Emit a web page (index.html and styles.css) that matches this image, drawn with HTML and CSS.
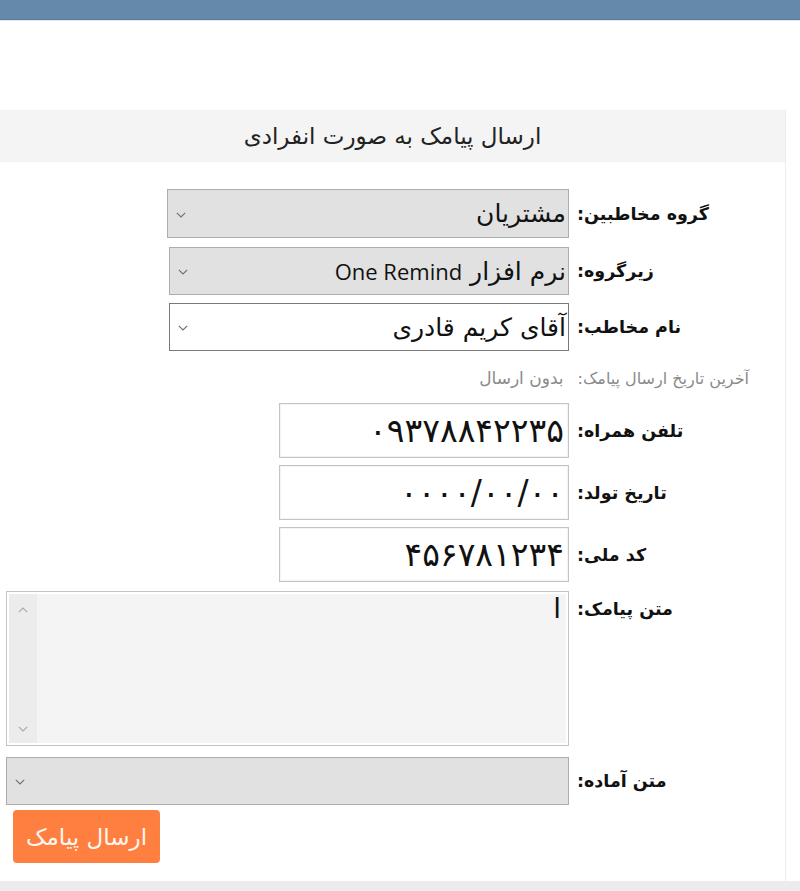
FILE: index.html
```html
<!DOCTYPE html>
<html lang="fa" dir="rtl">
<head>
<meta charset="utf-8">
<title>ارسال پیامک به صورت انفرادی</title>
<link rel="stylesheet" href="styles.css">
</head>
<body>
<div class="topbar"></div>
<main class="page">
  <section class="panel">
    <h1 class="panel-title">ارسال پیامک به صورت انفرادی</h1>
    <form class="form">
      <div class="row r1">
        <label class="lbl">گروه مخاطبین:</label>
        <div class="combo combo-gray w402">
          <span class="combo-val">مشتریان</span>
          <svg class="chev" width="10" height="6" viewBox="0 0 10 6"><path d="M0.8 0.8 L5 5 L9.2 0.8" fill="none" stroke="#6e6e6e" stroke-width="1.1"/></svg>
        </div>
      </div>
      <div class="row r2">
        <label class="lbl">زیرگروه:</label>
        <div class="combo combo-gray w400">
          <span class="combo-val">نرم افزار <span class="latin">One Remind</span></span>
          <svg class="chev" width="10" height="6" viewBox="0 0 10 6"><path d="M0.8 0.8 L5 5 L9.2 0.8" fill="none" stroke="#6e6e6e" stroke-width="1.1"/></svg>
        </div>
      </div>
      <div class="row r3">
        <label class="lbl">نام مخاطب:</label>
        <div class="combo combo-white w400">
          <span class="combo-val">آقای کریم قادری</span>
          <svg class="chev" width="10" height="6" viewBox="0 0 10 6"><path d="M0.8 0.8 L5 5 L9.2 0.8" fill="none" stroke="#6e6e6e" stroke-width="1.1"/></svg>
        </div>
      </div>
      <div class="info">
        <span class="info-lbl">آخرین تاریخ ارسال پیامک:</span>
        <span class="info-val">بدون ارسال</span>
      </div>
      <div class="row r-in">
        <label class="lbl">تلفن همراه:</label>
        <div class="field">۰۹۳۷۸۸۴۲۲۳۵</div>
      </div>
      <div class="row r-in">
        <label class="lbl">تاریخ تولد:</label>
        <div class="field">۰۰۰۰/۰۰/۰۰</div>
      </div>
      <div class="row r-in last">
        <label class="lbl">کد ملی:</label>
        <div class="field">۴۵۶۷۸۱۲۳۴</div>
      </div>
      <div class="row r-ta">
        <label class="lbl lbl-top">متن پیامک:</label>
        <div class="textarea">
          <span class="ta-text">ا</span>
          <div class="ta-scroll">
            <svg width="10" height="6" viewBox="0 0 10 6"><path d="M0.8 5.2 L5 1 L9.2 5.2" fill="none" stroke="#a8a8a8" stroke-width="1.1"/></svg>
            <svg width="10" height="6" viewBox="0 0 10 6"><path d="M0.8 0.8 L5 5 L9.2 0.8" fill="none" stroke="#a8a8a8" stroke-width="1.1"/></svg>
          </div>
        </div>
      </div>
      <div class="row r4">
        <label class="lbl">متن آماده:</label>
        <div class="combo combo-gray wfull">
          <span class="combo-val"></span>
          <svg class="chev" width="10" height="6" viewBox="0 0 10 6"><path d="M0.8 0.8 L5 5 L9.2 0.8" fill="none" stroke="#6e6e6e" stroke-width="1.1"/></svg>
        </div>
      </div>
      <div class="actions">
        <button type="button" class="btn-send">ارسال پیامک</button>
      </div>
    </form>
  </section>
</main>
<div class="footer"></div>
</body>
</html>
```
FILE: styles.css
```css
html, body {
  margin: 0;
  padding: 0;
  background: #ffffff;
}
body {
  font-family: "DejaVu Sans", "Noto Sans", sans-serif;
  color: #111;
  width: 800px;
  overflow: hidden;
}
.topbar {
  height: 19px;
  background: #6589ab;
  border-bottom: 1px solid #56799b;
  box-shadow: 0 1px 0 #e1e8ef;
}
.page {
  padding-top: 90px;
}
.panel {
  width: 786px;
  margin-right: 14px;
  box-sizing: border-box;
  border-right: 1px solid #ececec;
}
.panel-title {
  margin: 0;
  height: 52px;
  line-height: 52px;
  background: #f4f4f4;
  text-align: center;
  font-weight: normal;
  font-size: 23px;
  color: #222;
}
.form {
  padding: 27px 36px 18px 6px;
  display: flex;
  flex-direction: column;
}
.row {
  display: flex;
  align-items: center;
  gap: 8px;
}
.lbl {
  flex: none;
  width: 172px;
  text-align: left;
  font-weight: bold;
  font-size: 17.5px;
  color: #111;
}
.lbl-top {
  align-self: flex-start;
  padding-top: 8px;
}
.r1 { margin-bottom: 9px; }
.r2 { margin-bottom: 8px; }
.combo {
  box-sizing: border-box;
  height: 48px;
  display: flex;
  align-items: center;
  justify-content: space-between;
  padding: 0 2px 0 8px;
  font-size: 25px;
  color: #111;
}
.r1 .combo { height: 49px; }
.combo-gray {
  background: #e1e1e1;
  border: 1px solid #adadad;
}
.combo-white {
  background: #ffffff;
  border: 1px solid #7a7a7a;
}
.chev {
  flex: none;
  margin-top: 2px;
}
.w402 { width: 402px; }
.w400 { width: 400px; }
.wfull { width: 563px; }
.combo-val {
  white-space: nowrap;
}
.latin {
  font-family: "Open Sans", "Noto Sans", sans-serif;
  font-size: 22px;
}
.info {
  display: flex;
  align-items: center;
  gap: 14px;
  height: 20px;
  margin: 17px 0 15px;
  font-size: 16px;
  color: #8a8a8a;
}
.info-val {
  font-size: 17px;
  letter-spacing: 0.3px;
}
.r-in {
  margin-bottom: 7px;
}
.r-in.last {
  margin-bottom: 9px;
}
.field {
  box-sizing: border-box;
  width: 290px;
  height: 55px;
  background: #fff;
  border: 1px solid #c4c4c4;
  box-shadow: inset 0 0 0 1px #f4f4f4;
  display: flex;
  align-items: center;
  padding: 0 4px;
  font-size: 33px;
  color: #111;
}
.textarea {
  box-sizing: border-box;
  width: 563px;
  height: 155px;
  border: 1px solid #c4c4c4;
  box-shadow: inset 0 0 0 2px #ffffff;
  background: #f4f4f4;
  display: flex;
  justify-content: space-between;
  padding: 2px;
}
.ta-text {
  font-size: 28px;
  padding: 0 5px 0 0;
  line-height: 30px;
}
.ta-scroll {
  width: 28px;
  background: #ececec;
  display: flex;
  flex-direction: column;
  justify-content: space-between;
  align-items: center;
  padding: 13px 0 11px;
  box-sizing: border-box;
}
.r-ta { margin-bottom: 11px; }
.r4 { margin-bottom: 5px; }
.actions {
  display: flex;
  justify-content: flex-end;
  padding-left: 7px;
}
.btn-send {
  width: 147px;
  height: 53px;
  border: none;
  border-radius: 4px;
  background: #fe7f3f;
  color: #fff7f0;
  font-family: "DejaVu Sans", sans-serif;
  font-size: 23px;
  cursor: pointer;
}
.footer {
  height: 10px;
  background: #ececec;
}
```
